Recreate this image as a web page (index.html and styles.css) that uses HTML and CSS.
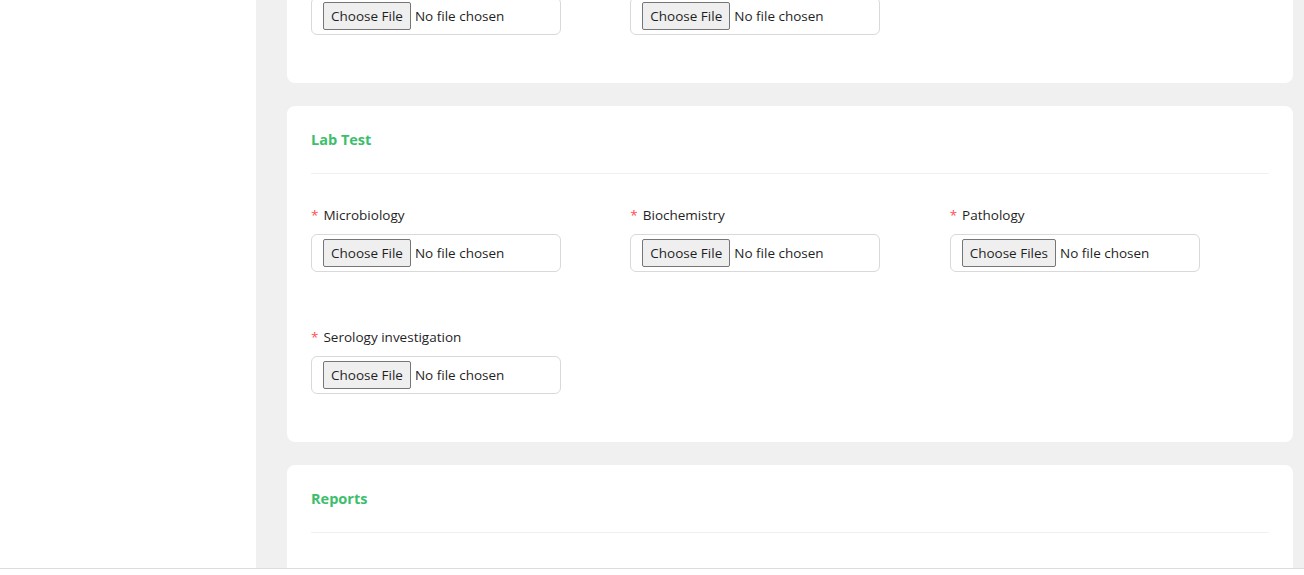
FILE: index.html
```html
<!DOCTYPE html>
<html lang="en">
<head>
<meta charset="utf-8">
<title>Lab Test</title>
<link rel="stylesheet" href="styles.css">
</head>
<body>
<div class="app">
  <div class="layout">
    <aside class="sidebar"></aside>
    <main class="main">
      <section class="card card-cut">
        <div class="fields">
          <div class="field">
            <div class="file-box"><input type="file" class="file"></div>
          </div>
          <div class="field">
            <div class="file-box"><input type="file" class="file"></div>
          </div>
        </div>
      </section>

      <section class="card">
        <div class="card-head"><h3 class="card-title">Lab Test</h3></div>
        <div class="card-body">
          <div class="fields">
            <div class="field">
              <label class="label"><span class="req">*</span>Microbiology</label>
              <div class="file-box"><input type="file" class="file"></div>
            </div>
            <div class="field">
              <label class="label"><span class="req">*</span>Biochemistry</label>
              <div class="file-box"><input type="file" class="file"></div>
            </div>
            <div class="field">
              <label class="label"><span class="req">*</span>Pathology</label>
              <div class="file-box"><input type="file" class="file" multiple></div>
            </div>
            <div class="field">
              <label class="label"><span class="req">*</span>Serology investigation</label>
              <div class="file-box"><input type="file" class="file"></div>
            </div>
          </div>
        </div>
      </section>

      <section class="card">
        <div class="card-head"><h3 class="card-title">Reports</h3></div>
        <div class="card-body"></div>
      </section>
    </main>
  </div>
  <footer class="footer"></footer>
</div>
</body>
</html>
```
FILE: styles.css
```css
* { box-sizing: border-box; }
html, body { margin: 0; height: 100%; }
body {
  font-family: "Open Sans", "Noto Sans", sans-serif;
  font-size: 13.5px;
  color: #1f1f1f;
  background: #fff;
  overflow: hidden;
}
.app { display: flex; flex-direction: column; height: 575px; }
.layout { display: flex; flex: 1; min-height: 0; overflow: hidden; }
.sidebar { width: 256px; flex: none; background: #fff; }
.main {
  flex: 1;
  background: #f0f0f0;
  padding: 0 11px 0 31px;
  display: flex;
  flex-direction: column;
  gap: 23px;
  overflow: hidden;
}
.card {
  background: #fff;
  border-radius: 8px;
  flex: none;
}
.card-cut {
  margin-top: -3px;
  border-top-left-radius: 0;
  border-top-right-radius: 0;
  padding: 0 24px 24px;
}
.card-head {
  margin: 0 24px;
  padding: 23px 0 22px;
  border-bottom: 1px solid #f0f0f0;
}
.card-title {
  margin: 0;
  font-size: 14.5px;
  line-height: 22px;
  font-weight: 700;
  color: #3dbe6c;
}
.card-body { padding: 30px 24px 24px; min-height: 60px; }
.fields {
  display: grid;
  grid-template-columns: repeat(3, 1fr);
}
.field { margin-bottom: 24px; }
.card-body .field:nth-child(-n+3) { margin-bottom: 54px; }
.label {
  display: block;
  height: 22px;
  line-height: 22px;
  margin-bottom: 8px;
}
.req { color: #ff4d4f; margin-right: 5px; }
.file-box {
  width: 250px;
  height: 38px;
  border: 1px solid #d9d9d9;
  border-radius: 6px;
  padding: 0 11px;
  display: flex;
  align-items: center;
  background: #fff;
}
.file {
  font-family: "Open Sans", "Noto Sans", sans-serif;
  font-size: 13.5px;
  color: #1f1f1f;
  width: 100%;
}
.file::file-selector-button {
  font-family: inherit;
  font-size: 13.5px;
  height: 28px;
  padding: 0 7px;
  margin-right: 4px;
  background: #efefef;
  border: 1px solid #767676;
  border-radius: 2px;
  color: #1f1f1f;
}
.footer {
  height: 7px;
  flex: none;
  border-top: 1px solid #dcdcdc;
  background: #fff;
}
```
